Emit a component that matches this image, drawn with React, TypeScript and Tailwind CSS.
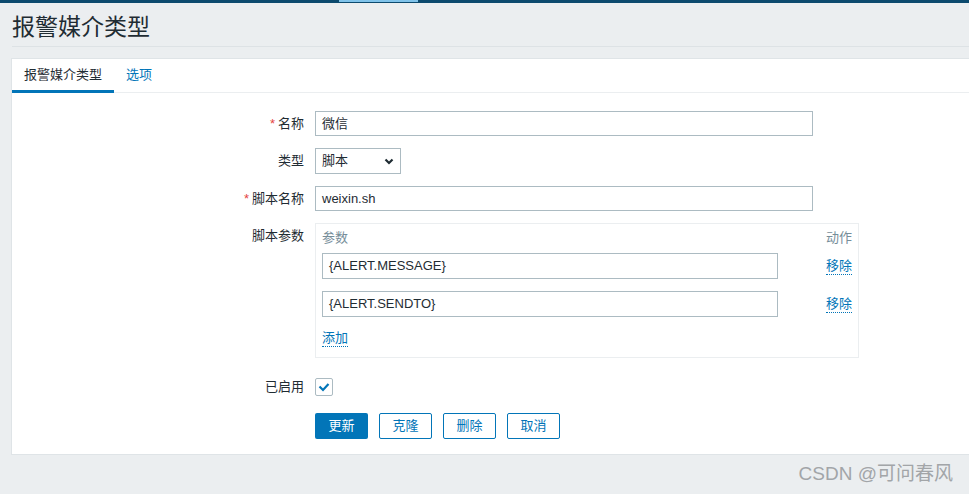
import React from "react";

const font = { fontFamily: '"Liberation Sans", "Noto Sans CJK SC", sans-serif' };

function Label({ children, req }: { children: React.ReactNode; req?: boolean }) {
  return (
    <div className="w-[303px] shrink-0 text-right pr-[11px] h-[25px] leading-[25px] text-[13px] text-[#1f2c33]">
      {req && <span className="text-[#e54343] mr-[3px]">*</span>}
      {children}
    </div>
  );
}

function TextInput({ value, w }: { value: string; w: string }) {
  return (
    <div className={`${w} h-[25px] border border-[#acbbc2] bg-white px-[6px] leading-[23px] text-[13px] text-[#1f2c33]`}>
      {value}
    </div>
  );
}

export default function App() {
  return (
    <div className="w-full h-[494px] bg-[#ebeef0] overflow-hidden text-[#1f2c33]" style={font}>
      <div className="h-[3px] bg-[#0c4a6e] flex">
        <div className="w-[339px]" />
        <div className="w-[79px] h-[2px] bg-[#80c3ea]" />
      </div>
      <div className="ml-[12px] h-[44px] pt-[8px] border-b border-[#dde2e5]">
        <div className="text-[23px] leading-[32px] text-[#1f2c33]">报警媒介类型</div>
      </div>
      <div className="mt-[11px] ml-[11px] bg-white border-l border-t border-b border-[#dfe4e7] h-[397px]">
        <div className="flex h-[34px] border-b border-[#ebeef0] text-[13px]">
          <div className="px-[12px] h-[34px] border-b-[3px] border-[#0275b8] leading-[31px] text-[#1f2c33]">
            报警媒介类型
          </div>
          <div className="px-[12px] leading-[31px] text-[#0275b8]">选项</div>
        </div>
        <div className="pt-[18px] flex flex-col">
          <div className="flex flex-col gap-[12px]">
            <div className="flex">
              <Label req>名称</Label>
              <TextInput value="微信" w="w-[498px]" />
            </div>
            <div className="flex">
              <div className="w-[303px] shrink-0 text-right pr-[11px] h-[26px] leading-[26px] text-[13px]">类型</div>
              <div className="w-[86px] h-[26px] border border-[#acbbc2] flex items-center justify-between pl-[6px] pr-[6px] text-[13px]">
                <span>脚本</span>
                <svg width="10" height="7" viewBox="0 0 10 7">
                  <polyline points="1.5,1.5 5,5 8.5,1.5" fill="none" stroke="#1f2c33" strokeWidth="2.2" />
                </svg>
              </div>
            </div>
            <div className="flex">
              <Label req>脚本名称</Label>
              <TextInput value="weixin.sh" w="w-[498px]" />
            </div>
            <div className="flex">
              <Label>脚本参数</Label>
              <div className="w-[544px] border border-[#ebeef0] px-[6px] pt-[4px] pb-[8px] text-[13px]">
                <div className="flex justify-between h-[20px] leading-[20px] text-[#768d99]">
                  <span>参数</span>
                  <span>动作</span>
                </div>
                <div className="flex justify-between items-center mt-[5px]">
                  <div className="w-[456px] h-[26px] border border-[#acbbc2] px-[6px] leading-[24px]">{"{ALERT.MESSAGE}"}</div>
                  <span className="text-[#0275b8] border-b border-dotted border-[#0275b8] leading-[16px]">移除</span>
                </div>
                <div className="flex justify-between items-center mt-[12px]">
                  <div className="w-[456px] h-[26px] border border-[#acbbc2] px-[6px] leading-[24px]">{"{ALERT.SENDTO}"}</div>
                  <span className="text-[#0275b8] border-b border-dotted border-[#0275b8] leading-[16px]">移除</span>
                </div>
                <div className="mt-[10px] h-[22px] flex items-center">
                  <span className="text-[#0275b8] border-b border-dotted border-[#0275b8] leading-[16px]">添加</span>
                </div>
              </div>
            </div>
          </div>
          <div className="flex mt-[20px] items-center">
            <div className="w-[303px] shrink-0 text-right pr-[11px] text-[13px] leading-[18px]">已启用</div>
            <div className="w-[18px] h-[18px] border border-[#acbbc2] rounded-[2px] flex items-center justify-center">
              <svg width="12" height="10" viewBox="0 0 12 10">
                <polyline points="1.5,4.5 5,8 10.5,2" fill="none" stroke="#0275b8" strokeWidth="2.2" />
              </svg>
            </div>
          </div>
          <div className="flex mt-[17px] pl-[303px] gap-[11px] text-[13px]">
            <div className="w-[53px] h-[26px] rounded-[2px] bg-[#0275b8] text-white flex items-center justify-center">更新</div>
            <div className="w-[53px] h-[26px] rounded-[2px] border border-[#0275b8] text-[#0275b8] flex items-center justify-center">克隆</div>
            <div className="w-[53px] h-[26px] rounded-[2px] border border-[#0275b8] text-[#0275b8] flex items-center justify-center">删除</div>
            <div className="w-[53px] h-[26px] rounded-[2px] border border-[#0275b8] text-[#0275b8] flex items-center justify-center">取消</div>
          </div>
        </div>
      </div>
      <div className="flex justify-end pr-[16px] pt-[8px] text-[19px] leading-[22px] text-[#a2a5a8]">CSDN @可问春风</div>
    </div>
  );
}
